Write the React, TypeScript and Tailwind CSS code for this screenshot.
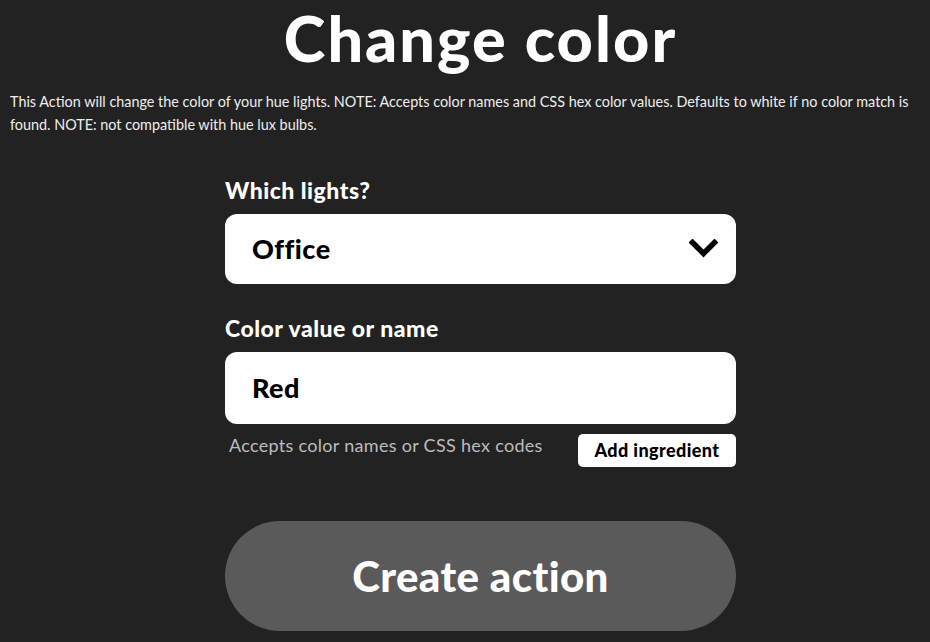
const font = { fontFamily: 'Lato, "Open Sans", sans-serif' };

const Chevron = () => (
  <svg width="29" height="20" viewBox="0 0 29 20" fill="none">
    <path d="M3.5 3.5 L14.5 14.5 L25.5 3.5" stroke="black" strokeWidth="5.5" strokeLinecap="square" />
  </svg>
);

export default function App() {
  return (
    <div className="min-h-[642px] w-full bg-[#222222] text-white overflow-hidden" style={font}>
      <h1 className="pl-[31px] text-center text-[63px] font-black leading-[76px] tracking-[2px]">Change color</h1>
      <p className="mt-[14px] px-[10px] text-[14.4px] leading-[23px] text-[#eeeeee]">
        This Action will change the color of your hue lights. NOTE: Accepts color names and CSS hex color values. Defaults to white if no color match is found. NOTE: not compatible with hue lux bulbs.
      </p>
      <div className="ml-[225px] mt-[40px] w-[511px]">
        <label className="block text-[23px] font-black leading-[28px] tracking-[0.5px]">Which lights?</label>
        <div className="mt-[10px] flex h-[70px] items-center justify-between rounded-[12px] bg-white pl-[27px] pr-[18px] text-black">
          <span className="text-[27px] font-black tracking-[0.5px]">Office</span>
          <Chevron />
        </div>
        <label className="mt-[30px] block text-[23px] font-black leading-[28px] tracking-[0.5px]">Color value or name</label>
        <div className="mt-[10px] flex h-[72px] items-center rounded-[12px] bg-white px-[27px] text-black">
          <span className="text-[27px] font-black tracking-[0.5px]">Red</span>
        </div>
        <div className="mt-[10px] flex items-start justify-between">
          <span className="pl-[4px] text-[18px] leading-[22px] tracking-[0.3px] text-[#bdbdbd]">Accepts color names or CSS hex codes</span>
          <button className="h-[33px] w-[158px] rounded-[5px] bg-white text-[18px] font-black tracking-[0.4px] text-black">Add ingredient</button>
        </div>
        <button className="mt-[54px] h-[110px] w-full rounded-full bg-[#5a5a5a] text-[42px] font-black tracking-[0.4px] text-white">Create action</button>
      </div>
    </div>
  );
}
